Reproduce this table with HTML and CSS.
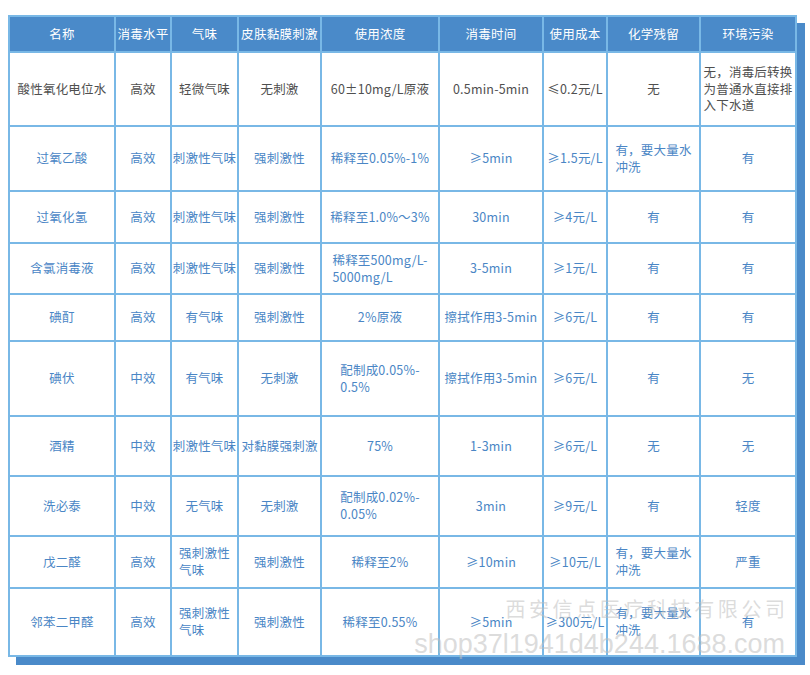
FILE: index.html
```html
<!DOCTYPE html>
<html lang="zh-CN">
<head>
<meta charset="utf-8">
<title>消毒剂对比</title>
<link rel="stylesheet" href="styles.css">
</head>
<body>
<div class="wrap">
<table class="tbl">
<colgroup>
<col class="c1"><col class="c2"><col class="c3"><col class="c4"><col class="c5"><col class="c6"><col class="c7"><col class="c8"><col class="c9">
</colgroup>
<thead>
<tr class="h"><th>名称</th><th>消毒水平</th><th>气味</th><th>皮肤黏膜刺激</th><th>使用浓度</th><th>消毒时间</th><th>使用成本</th><th>化学残留</th><th>环境污染</th></tr>
</thead>
<tbody>
<tr class="r1 gray"><td>酸性氧化电位水</td><td>高效</td><td>轻微气味</td><td>无刺激</td><td>60±10mg/L原液</td><td>0.5min-5min</td><td>≤0.2元/L</td><td>无</td><td><div class="ml">无，消毒后转换<br>为普通水直接排<br>入下水道</div></td></tr>
<tr class="r2"><td>过氧乙酸</td><td>高效</td><td>刺激性气味</td><td>强刺激性</td><td>稀释至0.05%-1%</td><td>≥5min</td><td>≥1.5元/L</td><td><div class="ml">有，要大量水<br>冲洗</div></td><td>有</td></tr>
<tr class="r3"><td>过氧化氢</td><td>高效</td><td>刺激性气味</td><td>强刺激性</td><td>稀释至1.0%～3%</td><td>30min</td><td>≥4元/L</td><td>有</td><td>有</td></tr>
<tr class="r4"><td>含氯消毒液</td><td>高效</td><td>刺激性气味</td><td>强刺激性</td><td><div class="ml">稀释至500mg/L-<br>5000mg/L</div></td><td>3-5min</td><td>≥1元/L</td><td>有</td><td>有</td></tr>
<tr class="r5"><td>碘酊</td><td>高效</td><td>有气味</td><td>强刺激性</td><td>2%原液</td><td>擦拭作用3-5min</td><td>≥6元/L</td><td>有</td><td>有</td></tr>
<tr class="r6"><td>碘伏</td><td>中效</td><td>有气味</td><td>无刺激</td><td><div class="ml">配制成0.05%-<br>0.5%</div></td><td>擦拭作用3-5min</td><td>≥6元/L</td><td>有</td><td>无</td></tr>
<tr class="r7"><td>酒精</td><td>中效</td><td>刺激性气味</td><td>对黏膜强刺激</td><td>75%</td><td>1-3min</td><td>≥6元/L</td><td>无</td><td>无</td></tr>
<tr class="r8"><td>洗必泰</td><td>中效</td><td>无气味</td><td>无刺激</td><td><div class="ml">配制成0.02%-<br>0.05%</div></td><td>3min</td><td>≥9元/L</td><td>有</td><td>轻度</td></tr>
<tr class="r9"><td>戊二醛</td><td>高效</td><td><div class="ml">强刺激性<br>气味</div></td><td>强刺激性</td><td>稀释至2%</td><td>≥10min</td><td>≥10元/L</td><td><div class="ml">有，要大量水<br>冲洗</div></td><td>严重</td></tr>
<tr class="r10"><td>邻苯二甲醛</td><td>高效</td><td><div class="ml">强刺激性<br>气味</div></td><td>强刺激性</td><td>稀释至0.55%</td><td>≥5min</td><td>≥300元/L</td><td><div class="ml">有，要大量水<br>冲洗</div></td><td>有</td></tr>
</tbody>
</table>
<div class="watermark">
<div class="wm-cn">西安信点医疗科技有限公司</div>
<div class="wm-en">shop37l1941d4b244.1688.com</div>
</div>
</div>
</body>
</html>
```
FILE: styles.css
```css
html, body {
  margin: 0;
  padding: 0;
  background: #ffffff;
}
body {
  padding: 15px 0 0 8px;
  font-family: "Noto Sans CJK SC", "Noto Sans", sans-serif;
}
.wrap {
  position: relative;
  width: 802px;
  height: 660px;
}
.tbl {
  border-collapse: collapse;
  table-layout: fixed;
  width: 787px;
  box-shadow: 8px 8px 0 #4a8ac9;
  background: #ffffff;
}
.c1 { width: 106px; }
.c2 { width: 56px; }
.c3 { width: 67px; }
.c4 { width: 83px; }
.c5 { width: 118px; }
.c6 { width: 104px; }
.c7 { width: 64px; }
.c8 { width: 93px; }
.c9 { width: 96px; }
.tbl th, .tbl td {
  border: 2px solid #79b8e6;
  padding: 0;
  text-align: center;
  vertical-align: middle;
  font-size: 12.5px;
  line-height: 16.8px;
  white-space: nowrap;
  overflow: hidden;
}
.tbl th {
  background: #4a8ac9;
  color: #ffffff;
  font-weight: normal;
  letter-spacing: 0.3px;
}
.tbl td {
  color: #4a86c5;
  letter-spacing: 0.2px;
}
.gray td {
  color: #4f4f4f;
}
.h { height: 36px; }
.r1 { height: 74px; }
.r2 { height: 65px; }
.r3 { height: 52px; }
.r4 { height: 51px; }
.r5 { height: 47px; }
.r6 { height: 75px; }
.r7 { height: 60px; }
.r8 { height: 60px; }
.r9 { height: 52px; }
.r10 { height: 68px; }
.ml {
  display: inline-block;
  text-align: left;
}
.watermark {
  position: absolute;
  right: 25px;
  top: 578px;
  text-align: right;
  color: rgba(190, 190, 190, 0.55);
  pointer-events: none;
}
.wm-cn {
  font-family: "Noto Sans CJK SC", sans-serif;
  font-size: 20px;
  letter-spacing: 3.6px;
  line-height: 32px;
  margin-right: -3.6px;
}
.wm-en {
  font-family: "Liberation Sans", sans-serif;
  font-size: 27px;
  line-height: 32px;
  margin-top: 3px;
  font-weight: 300;
}
```
